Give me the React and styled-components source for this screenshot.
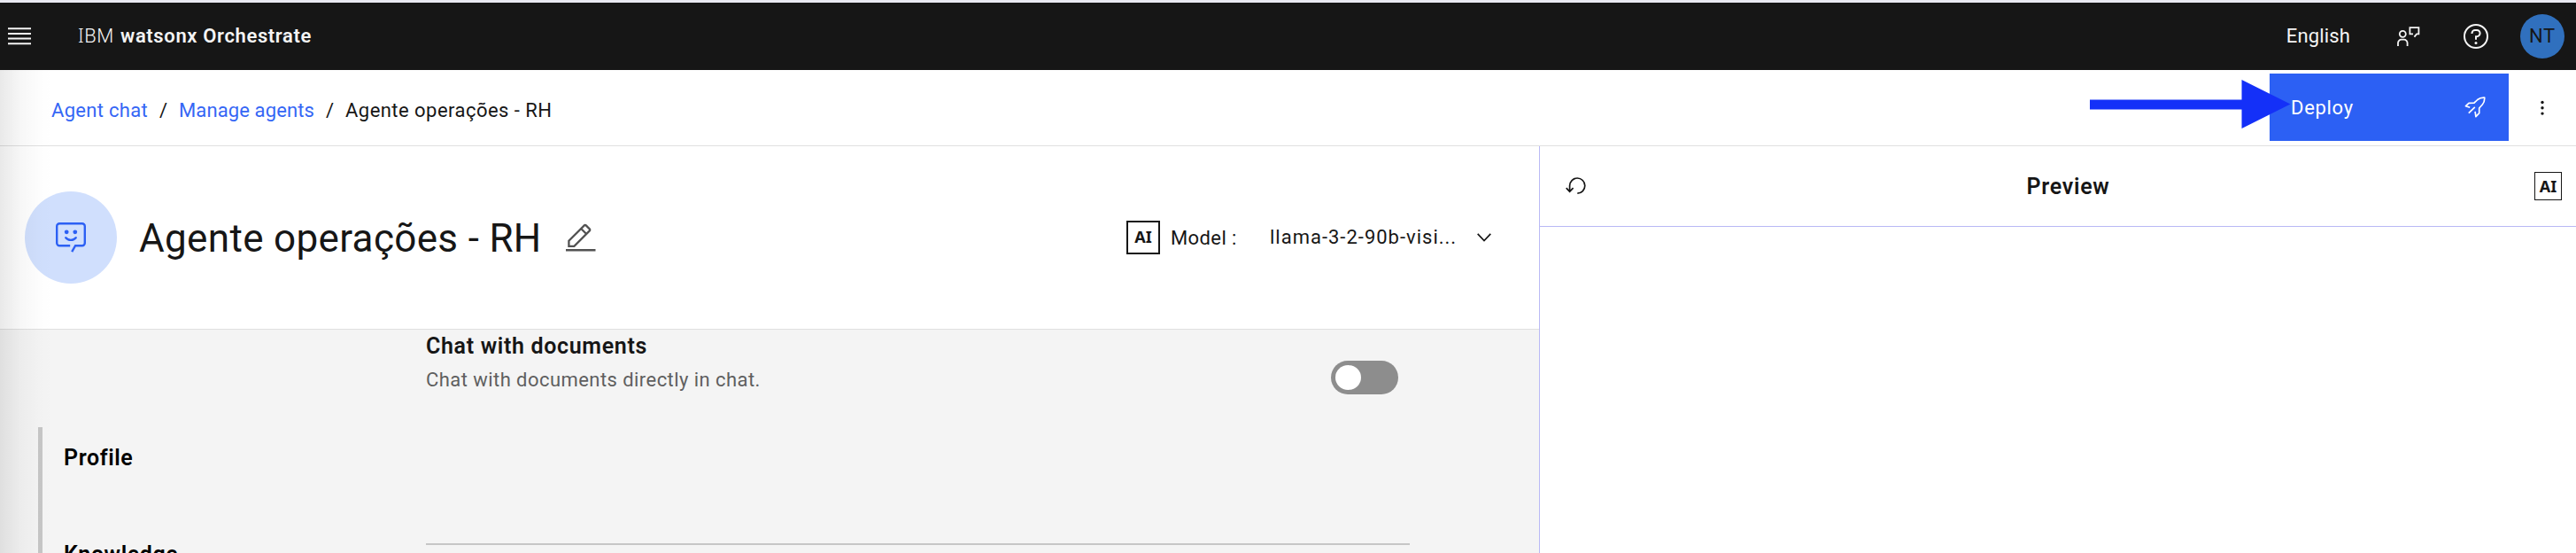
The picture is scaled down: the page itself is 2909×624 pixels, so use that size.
import React from 'react';
import styled, { createGlobalStyle } from 'styled-components';

const GlobalStyle = createGlobalStyle`
  *, *::before, *::after { box-sizing: border-box; }
  body {
    margin: 0;
    overflow: hidden;
    background: #ffffff;
    color: #161616;
    font-family: Roboto, "Noto Sans", sans-serif;
    font-size: 22px;
    line-height: 28px;
  }
  svg { display: block; flex: none; }
`;

const Page = styled.div`
  position: relative;
  display: flex;
  flex-direction: column;
  height: 624px;
  overflow: hidden;
  border-top: 3px solid #e9e9f1;
`;

const EdgeShadow = styled.div`
  position: absolute;
  z-index: 2;
  top: 76px;
  bottom: 0;
  left: 0;
  width: 60px;
  pointer-events: none;
  background: linear-gradient(90deg, rgba(0, 0, 0, 0.085), rgba(0, 0, 0, 0.03) 40%, rgba(0, 0, 0, 0.006) 75%, transparent);
`;

const Label = styled.span`
  white-space: pre;
  letter-spacing: ${(p) => p.$spacing || 0}px;
`;

const SlabCapital = styled.span`
  font-family: "Noto Sans", sans-serif;
  font-size: 0.98em;
  line-height: 1;
`;

const Header = styled.header`
  flex: none;
  display: flex;
  align-items: center;
  height: 76px;
  padding: 0 13px 0 9px;
  background: #161616;
  color: #f4f4f4;
`;

const Brand = styled.div`
  flex: 1;
  margin-left: 53px;
  padding-bottom: 1px;
  white-space: pre;

  b {
    font-weight: 600;
    letter-spacing: 0.64px;
  }
`;

const BrandPrefix = styled.span`
  display: inline-block;
  width: 48px;
  font-weight: 300;
  letter-spacing: 0.5px;
`;

const HeaderActions = styled.div`
  display: flex;
  align-items: center;

  svg:first-of-type { margin: 0 49px 0 53px; }
`;

const Avatar = styled.div`
  width: 50px;
  height: 50px;
  margin-left: 36px;
  border-radius: 50%;
  background: #3070be;
  color: #161616;
  line-height: 50px;
  text-align: center;
  letter-spacing: 0.8px;
`;

const Toolbar = styled.nav`
  flex: none;
  display: flex;
  align-items: center;
  height: 86px;
  padding: 0 36px 0 58px;
  border-bottom: 1px solid #e0e0e0;
`;

const Crumb = styled(Label)`
  color: ${(p) => (p.$current ? '#161616' : '#3566f5')};
`;

const Breadcrumb = styled.div`
  flex: 1;
  display: flex;
  padding-top: 6px;

  span + span::before {
    content: "/";
    display: inline-block;
    width: 35px;
    text-align: center;
    color: #161616;
    letter-spacing: 0;
  }
`;

const DeployButton = styled.button`
  position: relative;
  display: flex;
  align-items: center;
  justify-content: space-between;
  width: 270px;
  height: 76px;
  margin: 0 36px 1px 0;
  padding: 0 26px 0 24px;
  border: 0;
  background: #2c60f4;
  color: #ffffff;
  font: inherit;
  letter-spacing: 0.7px;

  span { padding-top: 2px; }
`;

const Pointer = styled.svg`
  position: absolute;
  z-index: 1;
  left: -203px;
  top: 6px;
`;

const Workspace = styled.main`
  flex: 1;
  display: flex;
  min-height: 0;
`;

const Editor = styled.section`
  display: flex;
  flex-direction: column;
  width: 1738px;
`;

const AgentHeader = styled.div`
  flex: none;
  display: flex;
  align-items: center;
  height: 207px;
  padding: 0 54px 0 28px;
  border-bottom: 1px solid #e0e0e0;
`;

const AgentBadge = styled.div`
  display: flex;
  align-items: center;
  justify-content: center;
  width: 104px;
  height: 104px;
  margin-right: 25px;
  border-radius: 50%;
  background: #d0dffd;
`;

const AgentTitle = styled.h1`
  margin: 2px 0 0;
  width: 482px;
  font-size: 44px;
  font-weight: 400;
  line-height: 56px;
  letter-spacing: 0.34px;
`;

const ModelPicker = styled.div`
  display: flex;
  align-items: center;
  margin-left: auto;
`;

const AiTag = styled.span`
  display: flex;
  justify-content: center;
  width: ${(p) => (p.$small ? 31 : 38)}px;
  height: ${(p) => (p.$small ? 32 : 38)}px;
  border: ${(p) => (p.$small ? 1 : 2)}px solid #161616;
  font-family: "Noto Sans", sans-serif;
  font-size: 18px;
  font-weight: 700;
  line-height: ${(p) => (p.$small ? 31 : 33)}px;
`;

const ModelLabel = styled(Label)`
  width: 112px;
  margin-left: 12px;
  padding-top: 2px;
`;

const ModelName = styled(Label)`
  width: 234px;
`;

const Settings = styled.div`
  flex: 1;
  display: flex;
  min-height: 0;
  overflow: hidden;
  background: #f4f4f4;
`;

const SideNav = styled.ul`
  width: 438px;
  height: 200px;
  margin: 110px 0 0 43px;
  padding: 21px 0 0 24px;
  border-left: 5px solid #c6c6c6;
  list-style: none;
`;

const SideNavItem = styled.li`
  height: 109px;
  color: #000000;
  font-size: 25px;
  font-weight: 600;
  letter-spacing: 0.6px;
`;

const SettingRow = styled.div`
  display: flex;
  justify-content: space-between;
  width: 1111px;
  height: 243px;
  padding: 5px 13px 0 0;
  border-bottom: 2px solid #c6c6c6;
`;

const SettingTitle = styled.h2`
  margin: 0;
  font-size: 25px;
  font-weight: 600;
  line-height: 28px;
  letter-spacing: 0.66px;
`;

const SettingHint = styled.p`
  margin: 10px 0 0;
  color: #5f5f5f;
  letter-spacing: 0.44px;
`;

const Toggle = styled.div`
  width: 76px;
  height: 38px;
  margin-top: 30px;
  padding: 5px;
  border-radius: 19px;
  background: #8d8d8d;

  &::before {
    content: "";
    display: block;
    width: 29px;
    height: 28px;
    border-radius: 50%;
    background: #ffffff;
  }
`;

const Preview = styled.aside`
  flex: 1;
  border-left: 1px solid #b9b9f5;
`;

const PreviewHeader = styled.div`
  display: flex;
  align-items: center;
  height: 91px;
  padding: 0 16px 0 29px;
  border-bottom: 1px solid #b9b9f5;

  h2 {
    flex: 1;
    margin: 0;
    padding: 1px 0 0 17px;
    text-align: center;
    font-size: 25px;
    font-weight: 600;
    line-height: 28px;
    letter-spacing: 0.7px;
  }
`;

function MenuIcon() {
  return (
    <svg width="26" height="22" viewBox="0 0 26 22" stroke="#f4f4f4" strokeWidth="2">
      <path d="M0 2.2h26M0 8h26M0 13.5h26M0 19.2h26" />
    </svg>
  );
}

function UserFeedbackIcon() {
  return (
    <svg width="26" height="24" viewBox="0 0 26 24" fill="none" stroke="#f4f4f4" strokeWidth="1.8">
      <circle cx="6.3" cy="9.3" r="3.5" />
      <path d="M1 23v-3.5a3.8 3.8 0 0 1 3.8-3.8h3a3.8 3.8 0 0 1 3.8 3.8V23M18 9.4h-3.6V2.2h10v7.2h-2.3l-2.7 3.2" />
    </svg>
  );
}

function HelpIcon() {
  return (
    <svg width="28" height="28" viewBox="0 0 28 28" fill="none" stroke="#f4f4f4" strokeWidth="2">
      <circle cx="14" cy="14" r="13" />
      <path d="M9.5 11v-.6a3.5 3.5 0 0 1 3.5-3.4h2a3.5 3.5 0 0 1 0 7.2h-1v3.6" />
      <circle cx="14" cy="21.5" r="1.5" fill="#f4f4f4" stroke="none" />
    </svg>
  );
}

function RocketIcon() {
  return (
    <svg width="24" height="24" viewBox="0 0 24 24" fill="none" stroke="#ffffff" strokeWidth="1.7" strokeLinejoin="round">
      <path d="M6.2 12.2 1.5 10.6 5 7.3 11 7.2 14.8 3.5C17 1.5 19.4.9 22.7 1.1 22.9 4.2 22.4 6.7 20.3 9L16.7 13v5.7L12.9 22.6 12.1 16.8" />
      <path d="M11.8 11.8 4.8 18.6" />
    </svg>
  );
}

function OverflowIcon() {
  return (
    <svg width="4" height="18" viewBox="0 0 4 18" fill="#161616">
      <circle cx="2" cy="2.5" r="1.7" />
      <circle cx="2" cy="8.8" r="1.7" />
      <circle cx="2" cy="15.1" r="1.7" />
    </svg>
  );
}

function AgentIcon() {
  return (
    <svg width="34" height="34" viewBox="0 0 34 34" fill="none" stroke="#2c60f4" strokeWidth="2.4">
      <path d="M16.2 26.2H4.2a3 3 0 0 1-3-3v-19a3 3 0 0 1 3-3h25.6a3 3 0 0 1 3 3v19a3 3 0 0 1-3 3h-7.7L18.2 33.2" />
      <path d="M11.3 17.2c2.7 3.5 8.7 3.5 11.4 0" strokeLinecap="round" />
      <circle cx="12.2" cy="10.8" r="2.4" fill="#2c60f4" stroke="none" />
      <circle cx="21.8" cy="10.8" r="2.4" fill="#2c60f4" stroke="none" />
    </svg>
  );
}

function EditIcon() {
  return (
    <svg width="34" height="32" viewBox="0 0 34 32" fill="none" stroke="#525252" strokeWidth="2.3">
      <path d="M3.4 25.8v-6L20.8 2.4a1.4 1.4 0 0 1 2 0l4 4a1.4 1.4 0 0 1 0 2L9.4 25.8zM17.2 6l6 6" />
      <path d="M0 30.2h33.5" strokeWidth="2.6" />
    </svg>
  );
}

function ChevronIcon() {
  return (
    <svg width="16" height="10" viewBox="0 0 16 10" fill="none" stroke="#161616" strokeWidth="1.7">
      <path d="M.7.8 8 8.5 15.3.8" />
    </svg>
  );
}

function ResetIcon() {
  return (
    <svg width="24" height="20" viewBox="0 0 24 20" fill="none" stroke="#161616" strokeWidth="1.7">
      <path d="M13.3 18.2a8.6 8.6 0 1 0-8.7-8.6v7M.7 12.2l3.9 4 4-4" />
    </svg>
  );
}

export default function App() {
  return (
    <Page>
      <GlobalStyle />
      <Header>
        <MenuIcon />
        <Brand>
          <BrandPrefix><SlabCapital>I</SlabCapital>BM</BrandPrefix>
          <b>watsonx Orchestrate</b>
        </Brand>
        <HeaderActions>
          <Label $spacing={0.15}>English</Label>
          <UserFeedbackIcon />
          <HelpIcon />
          <Avatar>NT</Avatar>
        </HeaderActions>
      </Header>
      <Toolbar>
        <Breadcrumb>
          <Crumb $spacing={0.3}>Agent chat</Crumb>
          <Crumb $spacing={0.12}>Manage agents</Crumb>
          <Crumb $current $spacing={0.46}>Agente operações - RH</Crumb>
        </Breadcrumb>
        <DeployButton>
          <span>Deploy</span>
          <RocketIcon />
          <Pointer width="227" height="57" viewBox="0 0 227 57" fill="#1430f8">
            <path d="M0 23.5H171.500V1L226.500 28.500 171.500 56V34.500H0z" />
          </Pointer>
        </DeployButton>
        <OverflowIcon />
      </Toolbar>
      <Workspace>
        <Editor>
          <AgentHeader>
            <AgentBadge><AgentIcon /></AgentBadge>
            <AgentTitle>Agente operações - RH</AgentTitle>
            <EditIcon />
            <ModelPicker>
              <AiTag>AI</AiTag>
              <ModelLabel $spacing={0.4}>Model :</ModelLabel>
              <ModelName $spacing={1}>llama-3-2-90b-visi...</ModelName>
              <ChevronIcon />
            </ModelPicker>
          </AgentHeader>
          <Settings>
            <SideNav>
              <SideNavItem>Profile</SideNavItem>
              <SideNavItem>Knowledge</SideNavItem>
            </SideNav>
            <SettingRow>
              <div>
                <SettingTitle>Chat with documents</SettingTitle>
                <SettingHint>Chat with documents directly in chat.</SettingHint>
              </div>
              <Toggle />
            </SettingRow>
          </Settings>
        </Editor>
        <Preview>
          <PreviewHeader>
            <ResetIcon />
            <h2>Preview</h2>
            <AiTag $small>AI</AiTag>
          </PreviewHeader>
        </Preview>
      </Workspace>
      <EdgeShadow />
    </Page>
  );
}
